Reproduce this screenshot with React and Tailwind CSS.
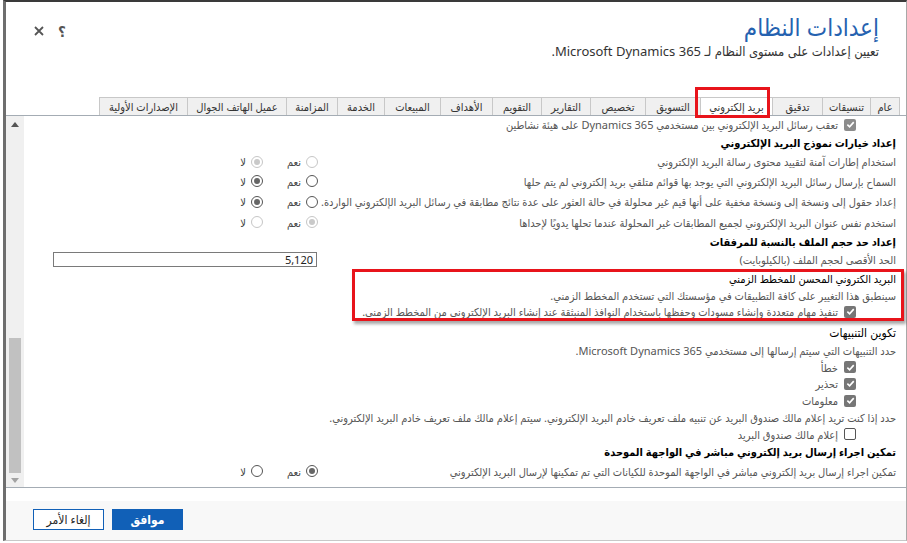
import React from 'react'

const tabs = [
  { label: 'عام', w: 'w-[29px]' },
  { label: 'تنسيقات', w: 'w-[48px]' },
  { label: 'تدقيق', w: 'w-[50px]' },
  { label: 'بريد إلكتروني', w: 'w-[72px]', active: true },
  { label: 'التسويق', w: 'w-[55px]' },
  { label: 'تخصيص', w: 'w-[55px]' },
  { label: 'التقارير', w: 'w-[49px]' },
  { label: 'التقويم', w: 'w-[49px]' },
  { label: 'الأهداف', w: 'w-[52px]' },
  { label: 'المبيعات', w: 'w-[56px]' },
  { label: 'الخدمة', w: 'w-[47px]' },
  { label: 'المزامنة', w: 'w-[51px]' },
  { label: 'عميل الهاتف الجوال', w: 'w-[99px]' },
  { label: 'الإصدارات الأولية', w: 'w-[88px]' },
]

function CheckBox({ checked, disabled }) {
  if (!checked) {
    return <span className="inline-block w-[12px] h-[12px] rounded-[2px] border border-[#555] bg-white shrink-0" />
  }
  return (
    <span className={`inline-flex items-center justify-center w-[12px] h-[12px] rounded-[2px] shrink-0 ${disabled ? 'bg-[#8c8c8c]' : 'bg-[#767676]'}`}>
      <svg width="9" height="9" viewBox="0 0 10 10">
        <path d="M1.5 5.2 L4 7.6 L8.6 2.4" fill="none" stroke="#fff" strokeWidth="1.8" />
      </svg>
    </span>
  )
}

function Radio({ checked, disabled }) {
  const ring = disabled ? 'border-[#c6c6c6]' : 'border-[#555]'
  const dot = disabled ? 'bg-[#c9c9c9]' : 'bg-[#666]'
  return (
    <span className={`inline-flex items-center justify-center w-[12px] h-[12px] rounded-full border bg-white shrink-0 ${ring}`}>
      {checked && <span className={`w-[6px] h-[6px] rounded-full ${dot}`} />}
    </span>
  )
}

function YesNo({ yes, disabled }) {
  return (
    <div className="flex items-center gap-[5px] text-[#444]">
      <Radio checked={yes} disabled={disabled} />
      <span className="w-[20px]">نعم</span>
      <span className="w-[8px]" />
      <Radio checked={!yes} disabled={disabled} />
      <span>لا</span>
    </div>
  )
}

function OptionRow({ h, text, yes, disabled, tight }) {
  return (
    <div className={`${h} flex items-center justify-between`}>
      <span className={`text-[#555] whitespace-nowrap ${tight ? 'tracking-[-0.3px]' : ''}`}>{text}</span>
      <div className="w-[66px] ml-[228px] flex shrink-0">
        <YesNo yes={yes} disabled={disabled} />
      </div>
    </div>
  )
}

function CheckRow({ h, text, checked = true, disabled }) {
  return (
    <div className={`${h} flex items-center pr-[40px] gap-[6px]`}>
      <CheckBox checked={checked} disabled={disabled} />
      <span className="text-[#555] whitespace-nowrap">{text}</span>
    </div>
  )
}

export default function App() {
  return (
    <div dir="rtl" className="w-[907px] h-[543px] bg-white overflow-hidden relative text-[11px] leading-none font-['Noto_Sans','DejaVu_Sans_Condensed','DejaVu_Sans',sans-serif]">
      <div className="w-[904px] h-[541px] flex flex-col border-t-2 border-t-[#3a3a3a] border-l-[3px] border-l-[#6e6e6e] border-r border-r-[#a8a8a8] border-b border-b-[#c8c8c8]">
        {/* header */}
        <div className="h-[95px] flex justify-between pr-[27px] pl-[28px] pt-[10px]">
          <div className="flex flex-col items-start">
            <h1 className="text-[24px] leading-[30px] text-[#2562b0]">إعدادات النظام</h1>
            <p className="text-[13px] mt-[3px] text-[#333]">تعيين إعدادات على مستوى النظام لـ Microsoft Dynamics 365.</p>
          </div>
          <div className="flex items-start gap-[14px] pt-[12px] text-[#555]">
            <span className="text-[15px] font-bold leading-none">؟</span>
            <svg width="10" height="10" viewBox="0 0 10 10" className="mt-[2px]">
              <path d="M1 1 L9 9 M9 1 L1 9" stroke="#555" strokeWidth="1.8" />
            </svg>
          </div>
        </div>

        {/* tabs */}
        <div className="h-[18px] flex pr-[6px]">
          {tabs.map((t) => (
            <div
              key={t.label}
              className={`${t.w} h-[18px] flex items-center justify-center border border-b-0 border-l-0 first:border-r border-[#c8c8c8] text-[#333] whitespace-nowrap ${t.active ? 'bg-white' : 'bg-[#f0f0f0]'}`}
            >
              {t.label}
            </div>
          ))}
          <div className="border-r border-[#c8c8c8]" />
        </div>

        {/* content panel */}
        <div className="h-[373px] flex border-t border-b border-[#a4acb4] relative">
          <div className="flex-1 min-w-0 overflow-hidden flex flex-col pr-[10px]">
            <CheckRow h="h-[17px]" text="تعقب رسائل البريد الإلكتروني بين مستخدمي Dynamics 365 على هيئة نشاطين" disabled />
            <div className="h-[19px] flex items-center font-semibold text-black">إعداد خيارات نموذج البريد الإلكتروني</div>
            <OptionRow h="h-[19px]" text="استخدام إطارات آمنة لتقييد محتوى رسالة البريد الإلكتروني" yes={false} disabled />
            <OptionRow h="h-[20px]" text="السماح بإرسال رسائل البريد الإلكتروني التي يوجد بها قوائم متلقي بريد إلكتروني لم يتم حلها" yes={false} />
            <OptionRow h="h-[21px]" tight text="إعداد حقول إلى ونسخة إلى ونسخة مخفية على أنها قيم غير محلولة في حالة العثور على عدة نتائج مطابقة في رسائل البريد الإلكتروني الواردة." yes={false} />
            <OptionRow h="h-[20px]" text="استخدم نفس عنوان البريد الإلكتروني لجميع المطابقات غير المحلولة عندما تحلها يدويًا لإحداها" yes disabled />
            <div className="h-[18px] flex items-center font-semibold text-black">إعداد حد حجم الملف بالنسبة للمرفقات</div>
            <div className="h-[18px] flex items-center justify-between">
              <span className="text-[#555]">الحد الأقصى لحجم الملف (بالكيلوبايت)</span>
              <div className="w-[264px] h-[15px] ml-[29px] shrink-0 border border-[#7a7a7a] flex items-center px-[3px] text-[#222]">5,120</div>
            </div>
            <div className="h-[2px]" />
            <div className="h-[17px] flex items-center text-black">البريد الكتروني المحسن للمخطط الزمني</div>
            <div className="h-[17px] flex items-center text-[#555]">سينطبق هذا التغيير على كافة التطبيقات في مؤسستك التي تستخدم المخطط الزمني.</div>
            <CheckRow h="h-[15px]" text="تنفيذ مهام متعددة وإنشاء مسودات وحفظها باستخدام النوافذ المنبثقة عند إنشاء البريد الإلكتروني من المخطط الزمني." />
            <div className="h-[23px] flex items-center pt-[4px] text-black text-[12px]">تكوين التنبيهات</div>
            <div className="h-[17px] flex items-center text-[#555]">حدد التنبيهات التي سيتم إرسالها إلى مستخدمي Microsoft Dynamics 365.</div>
            <CheckRow h="h-[16px]" text="خطأ" />
            <CheckRow h="h-[17px]" text="تحذير" />
            <CheckRow h="h-[17px]" text="معلومات" />
            <div className="h-[17px] flex items-center text-[#555] whitespace-nowrap">حدد إذا كنت تريد إعلام مالك صندوق البريد عن تنبيه ملف تعريف خادم البريد الإلكتروني. سيتم إعلام مالك ملف تعريف خادم البريد الإلكتروني.</div>
            <CheckRow h="h-[16px]" text="إعلام مالك صندوق البريد" checked={false} />
            <div className="h-[19px] flex items-center font-semibold text-black">تمكين اجراء إرسال بريد إلكتروني مباشر في الواجهة الموحدة</div>
            <OptionRow h="h-[20px]" text="تمكين اجراء إرسال بريد إلكتروني مباشر في الواجهة الموحدة للكيانات التي تم تمكينها لإرسال البريد الإلكتروني" yes />
          </div>

          {/* scrollbar (left side, RTL) */}
          <div className="w-[18px] shrink-0 bg-[#f0f0f0] flex flex-col items-center">
            <div className="h-[16px] flex items-center justify-center">
              <svg width="8" height="5" viewBox="0 0 8 5"><path d="M0 5 L4 0 L8 5 Z" fill="#555" /></svg>
            </div>
            <div className="flex-1 w-full flex flex-col justify-end px-[3px]">
              <div className="h-[135px] bg-[#c1c1c1]" />
            </div>
            <div className="h-[14px] flex items-center justify-center">
              <svg width="8" height="5" viewBox="0 0 8 5"><path d="M0 0 L4 5 L8 0 Z" fill="#a3a3a3" /></svg>
            </div>
          </div>

          {/* annotation box around timeline email section */}
          <div className="absolute top-[153px] left-[346px] w-[552px] h-[52px] border-[3px] border-[#e8141b] shadow-[2px_3px_3px_rgba(0,0,0,0.35)] pointer-events-none" />
        </div>

        {/* footer */}
        <div className="h-[13px]" />
        <div className="flex-1 bg-[#f8f8f8] flex justify-end items-center gap-[8px] pl-[27px] pb-[2px]">
          <button className="w-[71px] h-[21px] bg-[#1160b7] text-white text-[12px] font-semibold">موافق</button>
          <button className="w-[71px] h-[21px] bg-white border border-[#1160b7] text-[#262626] text-[12px]">إلغاء الأمر</button>
        </div>
      </div>

      {/* annotation box around the selected tab */}
      <div className="absolute top-[87px] left-[695px] w-[75px] h-[31px] border-[3px] border-[#e8141b] pointer-events-none" />
    </div>
  )
}
